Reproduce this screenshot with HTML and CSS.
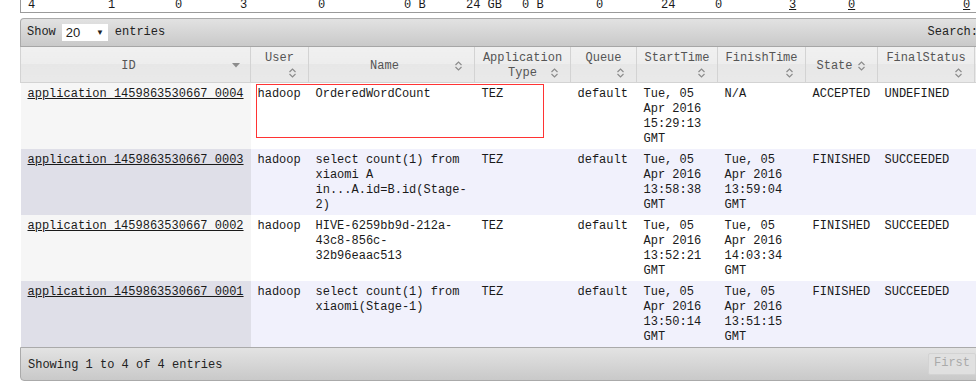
FILE: index.html
```html
<!DOCTYPE html>
<html lang="en">
<head>
  <meta charset="UTF-8">
  <meta name="viewport" content="width=device-width, initial-scale=1.0">
  <title>All Applications</title>
  <link rel="stylesheet" href="styles.css">
</head>
<body>
  <div class="page">

    <div class="metrics">
      <span>4</span>
      <span>1</span>
      <span>0</span>
      <span>3</span>
      <span>0</span>
      <span>0 B</span>
      <span>24 GB</span>
      <span>0 B</span>
      <span>0</span>
      <span>24</span>
      <span>0</span>
      <a href="#">3</a>
      <a href="#">0</a>
      <a href="#">0</a>
    </div>

    <div class="apps">
      <div class="toolbar">
        <div class="toolbar__length">
          <span>Show</span>
          <span class="select">20<span class="select__arrow">&#9660;</span></span>
          <span>entries</span>
        </div>
        <div class="toolbar__search">
          <span>Search:</span>
          <input type="text" class="toolbar__input">
        </div>
      </div>

      <table class="table">
        <colgroup>
          <col class="col-id">
          <col class="col-user">
          <col class="col-name">
          <col class="col-type">
          <col class="col-queue">
          <col class="col-start">
          <col class="col-finish">
          <col class="col-state">
          <col class="col-final">
          <col class="col-progress">
        </colgroup>
        <thead>
          <tr>
            <th>
              <div class="th__label">ID</div>
              <svg class="sort sort--desc" width="8" height="5" viewBox="0 0 8 5"><polygon points="0,0 8,0 4,4.5" fill="#8c8c8c"/></svg>
            </th>
            <th class="th--stack">
              <div class="th__label">User</div>
              <svg class="sort" width="9" height="12" viewBox="0 0 9 12"><path d="M1.5 5 L4.5 2 L7.5 5 M1.5 7 L4.5 10 L7.5 7" fill="none" stroke="#8c8c8c" stroke-width="1.2"/></svg>
            </th>
            <th>
              <div class="th__label">Name</div>
              <svg class="sort sort--mid" width="9" height="12" viewBox="0 0 9 12"><path d="M1.5 5 L4.5 2 L7.5 5 M1.5 7 L4.5 10 L7.5 7" fill="none" stroke="#8c8c8c" stroke-width="1.2"/></svg>
            </th>
            <th>
              <div class="th__label th__label--wide">Application<br>Type</div>
              <svg class="sort" width="9" height="12" viewBox="0 0 9 12"><path d="M1.5 5 L4.5 2 L7.5 5 M1.5 7 L4.5 10 L7.5 7" fill="none" stroke="#8c8c8c" stroke-width="1.2"/></svg>
            </th>
            <th class="th--stack">
              <div class="th__label">Queue</div>
              <svg class="sort" width="9" height="12" viewBox="0 0 9 12"><path d="M1.5 5 L4.5 2 L7.5 5 M1.5 7 L4.5 10 L7.5 7" fill="none" stroke="#8c8c8c" stroke-width="1.2"/></svg>
            </th>
            <th class="th--stack">
              <div class="th__label">StartTime</div>
              <svg class="sort" width="9" height="12" viewBox="0 0 9 12"><path d="M1.5 5 L4.5 2 L7.5 5 M1.5 7 L4.5 10 L7.5 7" fill="none" stroke="#8c8c8c" stroke-width="1.2"/></svg>
            </th>
            <th class="th--stack">
              <div class="th__label">FinishTime</div>
              <svg class="sort" width="9" height="12" viewBox="0 0 9 12"><path d="M1.5 5 L4.5 2 L7.5 5 M1.5 7 L4.5 10 L7.5 7" fill="none" stroke="#8c8c8c" stroke-width="1.2"/></svg>
            </th>
            <th>
              <div class="th__label">State</div>
              <svg class="sort sort--mid" width="9" height="12" viewBox="0 0 9 12"><path d="M1.5 5 L4.5 2 L7.5 5 M1.5 7 L4.5 10 L7.5 7" fill="none" stroke="#8c8c8c" stroke-width="1.2"/></svg>
            </th>
            <th class="th--stack">
              <div class="th__label">FinalStatus</div>
              <svg class="sort" width="9" height="12" viewBox="0 0 9 12"><path d="M1.5 5 L4.5 2 L7.5 5 M1.5 7 L4.5 10 L7.5 7" fill="none" stroke="#8c8c8c" stroke-width="1.2"/></svg>
            </th>
            <th>
              <div class="th__label">Progress</div>
            </th>
          </tr>
        </thead>
        <tbody>
          <tr class="odd">
            <td class="sorted"><a href="#">application_1459863530667_0004</a></td>
            <td>hadoop</td>
            <td>OrderedWordCount</td>
            <td>TEZ</td>
            <td>default</td>
            <td>Tue, 05<br>Apr 2016<br>15:29:13<br>GMT</td>
            <td>N/A</td>
            <td>ACCEPTED</td>
            <td>UNDEFINED</td>
            <td></td>
          </tr>
          <tr class="even">
            <td class="sorted"><a href="#">application_1459863530667_0003</a></td>
            <td>hadoop</td>
            <td>select count(1) from<br>xiaomi A<br>in...A.id=B.id(Stage-<br>2)</td>
            <td>TEZ</td>
            <td>default</td>
            <td>Tue, 05<br>Apr 2016<br>13:58:38<br>GMT</td>
            <td>Tue, 05<br>Apr 2016<br>13:59:04<br>GMT</td>
            <td>FINISHED</td>
            <td>SUCCEEDED</td>
            <td></td>
          </tr>
          <tr class="odd">
            <td class="sorted"><a href="#">application_1459863530667_0002</a></td>
            <td>hadoop</td>
            <td>HIVE-6259bb9d-212a-<br>43c8-856c-<br>32b96eaac513</td>
            <td>TEZ</td>
            <td>default</td>
            <td>Tue, 05<br>Apr 2016<br>13:52:21<br>GMT</td>
            <td>Tue, 05<br>Apr 2016<br>14:03:34<br>GMT</td>
            <td>FINISHED</td>
            <td>SUCCEEDED</td>
            <td></td>
          </tr>
          <tr class="even">
            <td class="sorted"><a href="#">application_1459863530667_0001</a></td>
            <td>hadoop</td>
            <td>select count(1) from<br>xiaomi(Stage-1)</td>
            <td>TEZ</td>
            <td>default</td>
            <td>Tue, 05<br>Apr 2016<br>13:50:14<br>GMT</td>
            <td>Tue, 05<br>Apr 2016<br>13:51:15<br>GMT</td>
            <td>FINISHED</td>
            <td>SUCCEEDED</td>
            <td></td>
          </tr>
        </tbody>
      </table>

      <div class="footer">
        <span class="footer__info">Showing 1 to 4 of 4 entries</span>
        <span class="pager">
          <span class="pager__btn pager__btn_disabled">First</span>
          <span class="pager__btn pager__btn_disabled">Previous</span>
          <span class="pager__btn">1</span>
        </span>
      </div>

      <div class="mark"></div>
    </div>

  </div>
</body>
</html>
```

FILE: styles.css
```css
*, *:after, *:before {
  box-sizing: border-box;
}

html, body {
  margin: 0;
  overflow: hidden;
  background-color: #fff;
  color: #1a1a1a;
  font-family: "Liberation Mono", "DejaVu Sans Mono", monospace;
  font-size: 12px;
  line-height: 15px;
}

a {
  color: #1a1a1a;
}

.page {
  width: 1200px;
  padding-left: 20px;
}

/* cluster metrics row, cut at the top */

.metrics {
  display: grid;
  grid-template-columns: 80px 67px 65px 78px 86px 62px 56px 74px 65px 54px 74px 59px 115px 40px;
  width: 1121px;
  margin-top: -2px;
  padding-left: 7px;
  border-left: 1px solid #9a9a9a;
  border-bottom: 1px solid #9a9a9a;
  line-height: 14px;
}

/* applications table */

.apps {
  position: relative;
  width: 1121px;
  margin-top: 5px;
}

.toolbar {
  display: flex;
  align-items: center;
  justify-content: space-between;
  height: 29px;
  padding: 0 7px 0 6px;
  border: 1px solid #aaa;
  border-bottom-color: #a6a6a6;
  border-radius: 4px 4px 0 0;
  background: linear-gradient(#e2e2e2, #c9c9c9);
  color: #222;
}

.toolbar__length,
.toolbar__search {
  display: flex;
  align-items: center;
}

.select {
  display: inline-flex;
  align-items: center;
  width: 46px;
  height: 17px;
  margin: 0 7px 0 6px;
  padding: 0 4px;
  background-color: #fff;
  font-family: "Liberation Sans", Arial, sans-serif;
  font-size: 13px;
}

.select__arrow {
  margin-left: auto;
  font-size: 8px;
}

.toolbar__input {
  width: 147px;
  height: 20px;
  margin-left: 8px;
  border: 1px solid #aaa;
}

.table {
  width: 1121px;
  border-collapse: collapse;
  table-layout: fixed;
}

.col-id { width: 230px; }
.col-user { width: 58px; }
.col-name { width: 166px; }
.col-type { width: 96px; }
.col-queue { width: 66px; }
.col-start { width: 81px; }
.col-finish { width: 88px; }
.col-state { width: 72px; }
.col-final { width: 97px; }
.col-progress { width: 167px; }

th {
  position: relative;
  padding: 4px 7px 1px;
  border: 1px solid #d3d3d3;
  border-top: none;
  background: linear-gradient(#f0f0f0 0%, #ededed 50%, #e7e7e7 50%, #e9e9e9 100%);
  color: #555;
  font-weight: normal;
  text-align: center;
  vertical-align: middle;
}

.th__label {
  padding-right: 14px;
}

.th__label--wide {
  padding-right: 0;
}

.th--stack .th__label {
  padding-right: 0;
  padding-bottom: 15px;
}

.sort {
  position: absolute;
  right: 11px;
  bottom: 3px;
}

.sort--mid {
  top: 13px;
  bottom: auto;
}

.sort--desc {
  top: 16px;
  right: 10px;
}

td {
  padding: 4px 7px 2px;
  vertical-align: top;
  white-space: nowrap;
}

.odd {
  background-color: #fff;
}

.odd .sorted {
  background-color: #f6f6f6;
}

.even {
  background-color: #f1f1fc;
}

.even .sorted {
  background-color: #dfdfe8;
}

.footer {
  display: flex;
  align-items: center;
  height: 34px;
  padding: 0 7px;
  border: 1px solid #aaa;
  border-radius: 0 0 4px 4px;
  background: linear-gradient(#e3e3e3, #c9c9c9);
  color: #222;
}

.footer__info {
  width: 900px;
  padding-top: 3px;
}

.pager {
  display: flex;
  gap: 2px;
}

.pager__btn {
  padding: 2px 5px 3px;
  border: 1px solid #d3d3d3;
  border-radius: 2px;
  background-color: #e0e0e0;
}

.pager__btn_disabled {
  color: #aaa;
}

/* red annotation frame drawn over the first row */
.mark {
  position: absolute;
  left: 236px;
  top: 66px;
  width: 288px;
  height: 54px;
  border: 1px solid #f33;
}
```
